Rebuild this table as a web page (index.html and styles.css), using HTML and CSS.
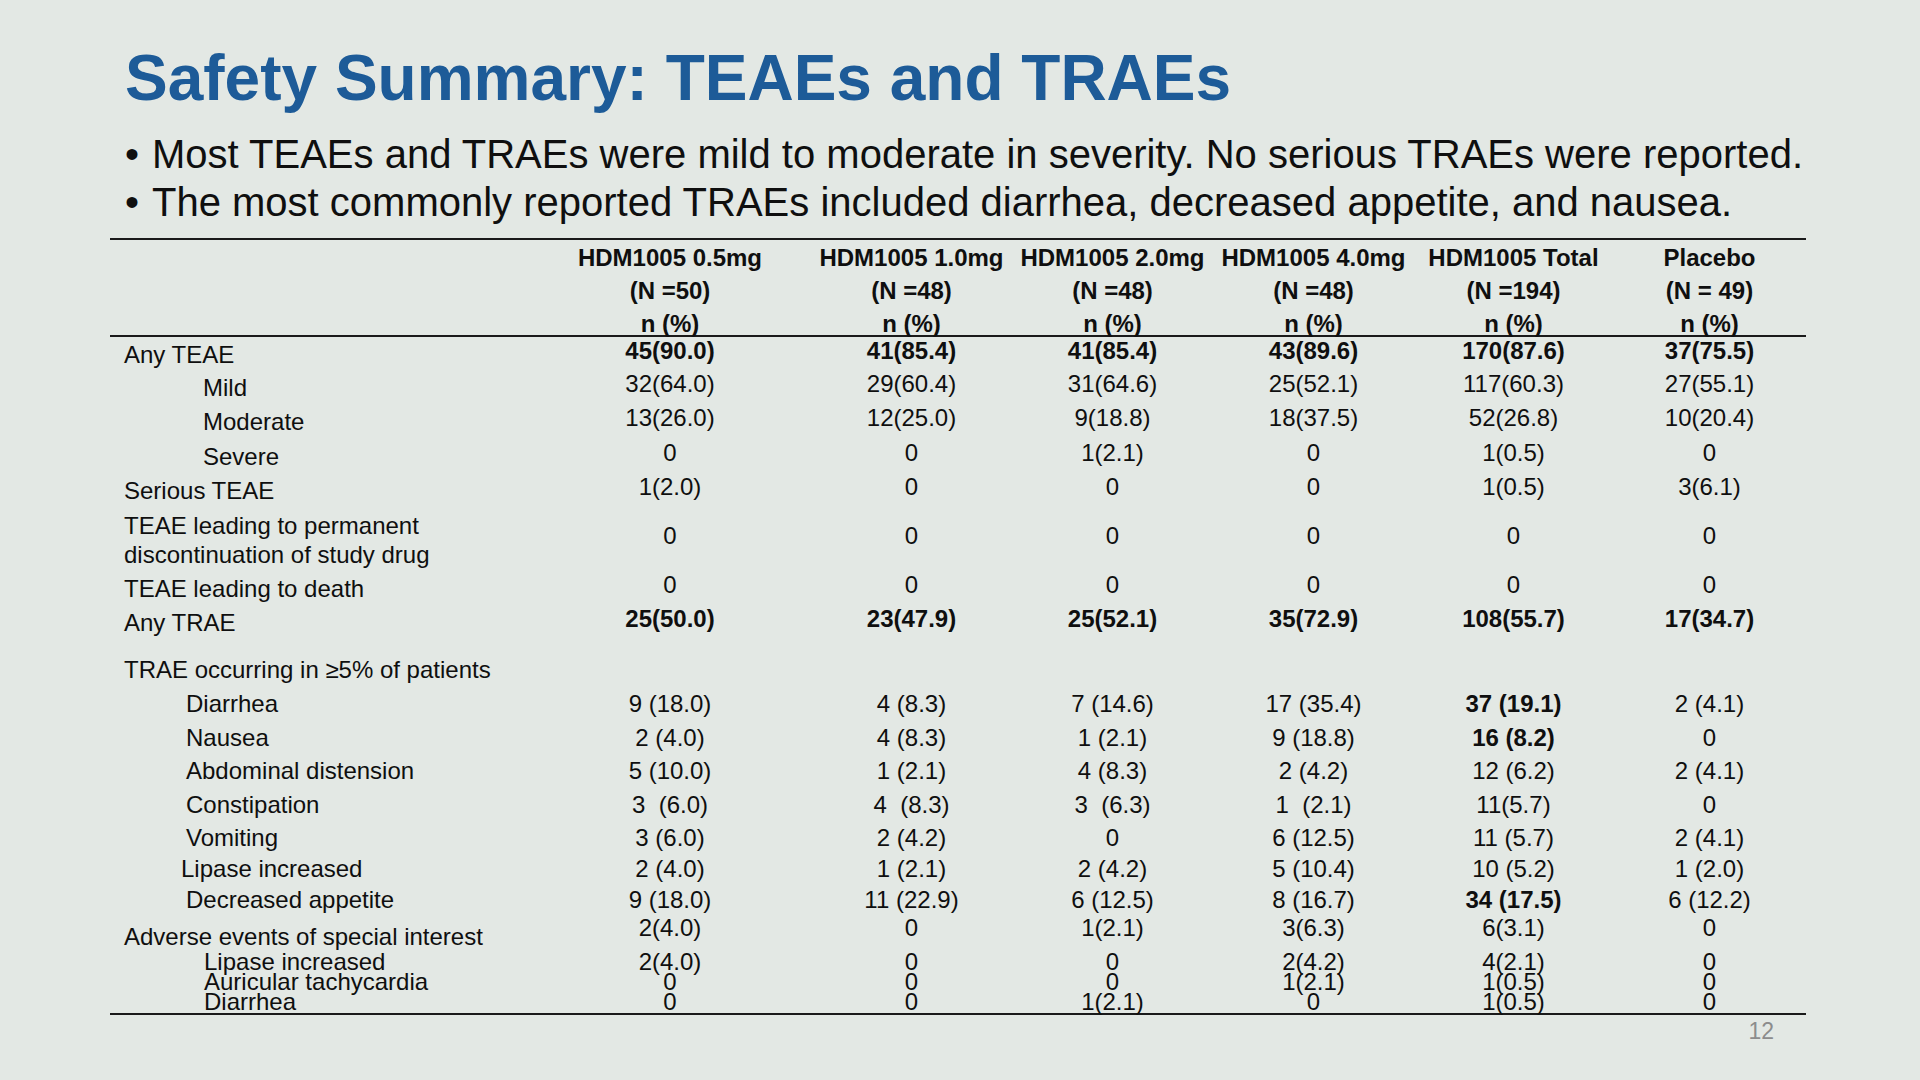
FILE: index.html
```html
<!DOCTYPE html>
<html lang="en">
<head>
<meta charset="utf-8">
<title>Safety Summary: TEAEs and TRAEs</title>
<link rel="stylesheet" href="styles.css">
</head>
<body>
<div class="slide">
  <h1 class="title">Safety Summary: TEAEs and TRAEs</h1>
  <ul class="bullets">
    <li><span class="dot">•</span><span>Most TEAEs and TRAEs were mild to moderate in severity. No serious TRAEs were reported.</span></li>
    <li><span class="dot">•</span><span>The most commonly reported TRAEs included diarrhea, decreased appetite, and nausea.</span></li>
  </ul>
  <table class="safety">
    <colgroup>
      <col class="c-lab"><col class="c-1"><col class="c-n"><col class="c-n"><col class="c-n"><col class="c-5"><col class="c-6">
    </colgroup>
    <thead>
      <tr>
        <th></th>
        <th><div class="hl">HDM1005 0.5mg</div><div class="hl">(N =50)</div><div class="hl last">n (%)</div></th>
        <th><div class="hl">HDM1005 1.0mg</div><div class="hl">(N =48)</div><div class="hl last">n (%)</div></th>
        <th><div class="hl">HDM1005 2.0mg</div><div class="hl">(N =48)</div><div class="hl last">n (%)</div></th>
        <th><div class="hl">HDM1005 4.0mg</div><div class="hl">(N =48)</div><div class="hl last">n (%)</div></th>
        <th><div class="hl">HDM1005 Total</div><div class="hl">(N =194)</div><div class="hl last">n (%)</div></th>
        <th><div class="hl">Placebo</div><div class="hl">(N = 49)</div><div class="hl last">n (%)</div></th>
      </tr>
    </thead>
    <tbody>
      <tr class="h34">
        <td class="lab">Any TEAE</td>
        <td class="v b">45(90.0)</td><td class="v b">41(85.4)</td><td class="v b">41(85.4)</td><td class="v b">43(89.6)</td><td class="v b">170(87.6)</td><td class="v b">37(75.5)</td>
      </tr>
      <tr class="h34">
        <td class="lab in2">Mild</td>
        <td class="v">32(64.0)</td><td class="v">29(60.4)</td><td class="v">31(64.6)</td><td class="v">25(52.1)</td><td class="v">117(60.3)</td><td class="v">27(55.1)</td>
      </tr>
      <tr class="h35">
        <td class="lab in2">Moderate</td>
        <td class="v">13(26.0)</td><td class="v">12(25.0)</td><td class="v">9(18.8)</td><td class="v">18(37.5)</td><td class="v">52(26.8)</td><td class="v">10(20.4)</td>
      </tr>
      <tr class="h34">
        <td class="lab in2">Severe</td>
        <td class="v">0</td><td class="v">0</td><td class="v">1(2.1)</td><td class="v">0</td><td class="v">1(0.5)</td><td class="v">0</td>
      </tr>
      <tr class="h34">
        <td class="lab">Serious TEAE</td>
        <td class="v">1(2.0)</td><td class="v">0</td><td class="v">0</td><td class="v">0</td><td class="v">1(0.5)</td><td class="v">3(6.1)</td>
      </tr>
      <tr class="h64">
        <td class="lab two">TEAE leading to permanent<br>discontinuation of study drug</td>
        <td class="v mid">0</td><td class="v mid">0</td><td class="v mid">0</td><td class="v mid">0</td><td class="v mid">0</td><td class="v mid">0</td>
      </tr>
      <tr class="h34">
        <td class="lab">TEAE leading to death</td>
        <td class="v">0</td><td class="v">0</td><td class="v">0</td><td class="v">0</td><td class="v">0</td><td class="v">0</td>
      </tr>
      <tr class="h34">
        <td class="lab">Any TRAE</td>
        <td class="v b">25(50.0)</td><td class="v b">23(47.9)</td><td class="v b">25(52.1)</td><td class="v b">35(72.9)</td><td class="v b">108(55.7)</td><td class="v b">17(34.7)</td>
      </tr>
      <tr class="h51">
        <td class="lab section">TRAE occurring in ≥5% of patients</td>
        <td></td><td></td><td></td><td></td><td></td><td></td>
      </tr>
      <tr class="h34">
        <td class="lab in1 flat">Diarrhea</td>
        <td class="v">9 (18.0)</td><td class="v">4 (8.3)</td><td class="v">7 (14.6)</td><td class="v">17 (35.4)</td><td class="v b">37 (19.1)</td><td class="v">2 (4.1)</td>
      </tr>
      <tr class="h33">
        <td class="lab in1 flat">Nausea</td>
        <td class="v">2 (4.0)</td><td class="v">4 (8.3)</td><td class="v">1 (2.1)</td><td class="v">9 (18.8)</td><td class="v b">16 (8.2)</td><td class="v">0</td>
      </tr>
      <tr class="h34">
        <td class="lab in1 flat">Abdominal distension</td>
        <td class="v">5 (10.0)</td><td class="v">1 (2.1)</td><td class="v">4 (8.3)</td><td class="v">2 (4.2)</td><td class="v">12 (6.2)</td><td class="v">2 (4.1)</td>
      </tr>
      <tr class="h33">
        <td class="lab in1 flat">Constipation</td>
        <td class="v">3  (6.0)</td><td class="v">4  (8.3)</td><td class="v">3  (6.3)</td><td class="v">1  (2.1)</td><td class="v">11(5.7)</td><td class="v">0</td>
      </tr>
      <tr class="h31">
        <td class="lab in1 flat">Vomiting</td>
        <td class="v">3 (6.0)</td><td class="v">2 (4.2)</td><td class="v">0</td><td class="v">6 (12.5)</td><td class="v">11 (5.7)</td><td class="v">2 (4.1)</td>
      </tr>
      <tr class="h31">
        <td class="lab in1b flat">Lipase increased</td>
        <td class="v">2 (4.0)</td><td class="v">1 (2.1)</td><td class="v">2 (4.2)</td><td class="v">5 (10.4)</td><td class="v">10 (5.2)</td><td class="v">1 (2.0)</td>
      </tr>
      <tr class="h25">
        <td class="lab in1 flat">Decreased appetite</td>
        <td class="v">9 (18.0)</td><td class="v">11 (22.9)</td><td class="v">6 (12.5)</td><td class="v">8 (16.7)</td><td class="v b">34 (17.5)</td><td class="v">6 (12.2)</td>
      </tr>
      <tr class="h38">
        <td class="lab low">Adverse events of special interest</td>
        <td class="v">2(4.0)</td><td class="v">0</td><td class="v">1(2.1)</td><td class="v">3(6.3)</td><td class="v">6(3.1)</td><td class="v">0</td>
      </tr>
      <tr class="h20 tight">
        <td class="lab in3">Lipase increased</td>
        <td class="v">2(4.0)</td><td class="v">0</td><td class="v">0</td><td class="v">2(4.2)</td><td class="v">4(2.1)</td><td class="v">0</td>
      </tr>
      <tr class="h20 tight">
        <td class="lab in3">Auricular tachycardia</td>
        <td class="v">0</td><td class="v">0</td><td class="v">0</td><td class="v">1(2.1)</td><td class="v">1(0.5)</td><td class="v">0</td>
      </tr>
      <tr class="h22 tight">
        <td class="lab in3">Diarrhea</td>
        <td class="v">0</td><td class="v">0</td><td class="v">1(2.1)</td><td class="v">0</td><td class="v">1(0.5)</td><td class="v">0</td>
      </tr>
    </tbody>
  </table>
  <div class="pgnum">12</div>
</div>
</body>
</html>
```

FILE: styles.css
```css
html, body {
  margin: 0;
  padding: 0;
}

body {
  width: 1920px;
  height: 1080px;
  overflow: hidden;
  background: #e3e8e4;
  color: #0f0f0f;
  font-family: "Liberation Sans", Arial, sans-serif;
}

.slide {
  padding: 46px 0 0 110px;
  width: 1696px;
}

.title {
  margin: 0 0 0 15px;
  font-size: 64px;
  line-height: 64px;
  font-weight: 700;
  color: #1d5b98;
  white-space: nowrap;
}

.bullets {
  list-style: none;
  margin: 20px 0 0 15px;
  padding: 0;
  font-size: 40px;
  line-height: 48px;
  white-space: nowrap;
}

.bullets li {
  display: flex;
}

.bullets .dot {
  width: 27px;
  flex: none;
}

.safety {
  margin-top: 12px;
  width: 1696px;
  table-layout: fixed;
  border-collapse: collapse;
  border-spacing: 0;
  border-top: 2px solid #1a1a1a;
  border-bottom: 2px solid #1a1a1a;
  font-size: 24px;
}

.c-lab { width: 419px; }
.c-1 { width: 282px; }
.c-n { width: 201px; }
.c-5 { width: 199px; }
.c-6 { width: 193px; }

.safety thead tr {
  border-bottom: 2px solid #1a1a1a;
}

.safety th {
  padding: 1px 0 0 0;
  vertical-align: top;
  text-align: center;
  font-weight: 700;
  white-space: nowrap;
}

.hl {
  height: 33px;
  line-height: 33px;
}

.hl.last {
  height: 28px;
}

.safety td {
  padding: 0;
  vertical-align: top;
  line-height: 28px;
  white-space: pre;
}

.lab {
  padding-left: 14px !important;
  padding-top: 4px !important;
  text-align: left;
}

.lab.in1 { padding-left: 76px !important; }
.lab.in1b { padding-left: 71px !important; }
.lab.in2 { padding-left: 93px !important; }
.lab.in3 { padding-left: 94px !important; }

.lab.flat { padding-top: 0 !important; }
.lab.two { line-height: 29px; }
.lab.section { padding-top: 17px !important; }
.lab.low { padding-top: 9px !important; }

.v {
  text-align: center;
}

.v.mid { padding-top: 15px !important; }

.b { font-weight: 700; }

.tight td {
  line-height: 20px;
  padding-top: 0 !important;
}

.h20 { height: 20px; }
.h22 { height: 22px; }
.h25 { height: 25px; }
.h31 { height: 31px; }
.h33 { height: 33px; }
.h34 { height: 34px; }
.h35 { height: 35px; }
.h38 { height: 38px; }
.h51 { height: 51px; }
.h64 { height: 64px; }

.pgnum {
  margin-top: 5px;
  padding-right: 32px;
  text-align: right;
  font-size: 23px;
  line-height: 23px;
  color: #8c8c8c;
}
```
